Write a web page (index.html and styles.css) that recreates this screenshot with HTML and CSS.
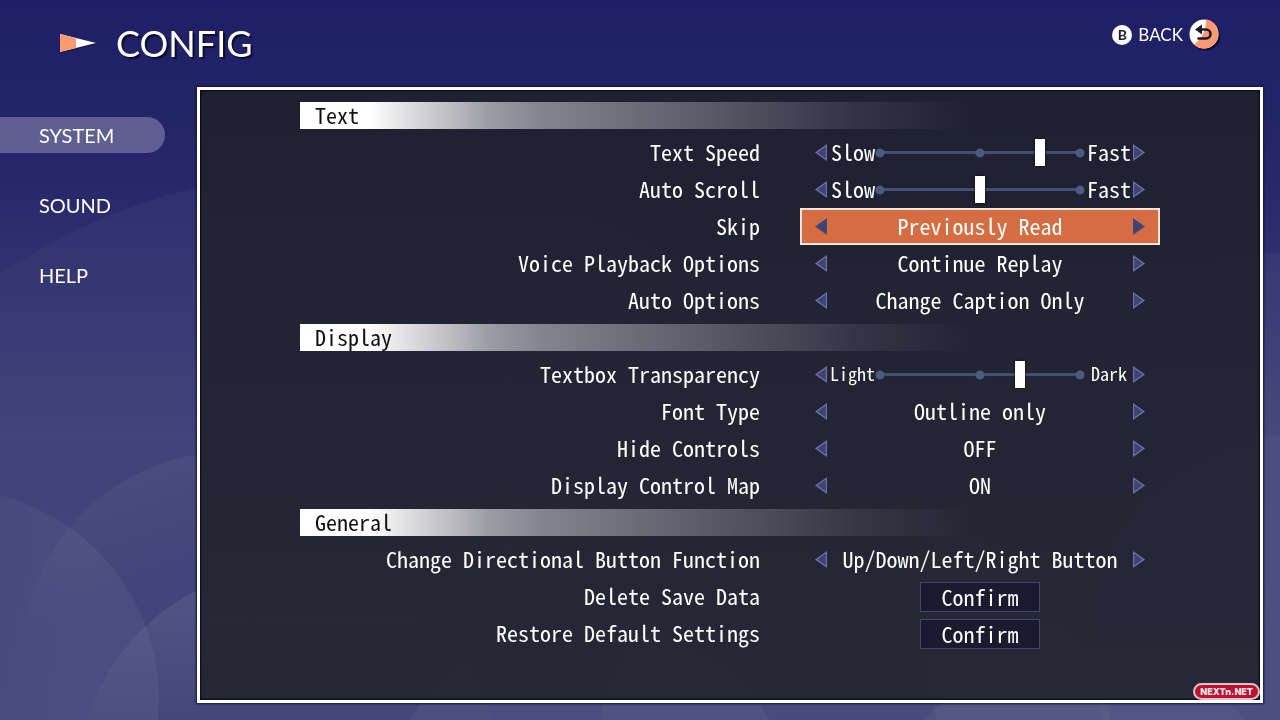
FILE: index.html
```
<!DOCTYPE html>
<html lang="en">
<head>
    <meta charset="UTF-8">
    <meta name="viewport" content="width=device-width, initial-scale=1.0">
    <title>Config</title>
    <link rel="stylesheet" href="styles.css">
</head>
<body>
<!-- Background circles -->
<svg class="backdrop" viewBox="0 0 1280 720" preserveAspectRatio="xMidYMid slice" aria-hidden="true">
    <defs>
        <linearGradient id="fadeLeft" x1="0" y1="0" x2="1" y2="0">
            <stop offset="0.25" stop-color="#8f93a8" stop-opacity="0"/>
            <stop offset="0.8" stop-color="#8f93a8" stop-opacity="0.12"/>
        </linearGradient>
        <linearGradient id="fadeDown" x1="0" y1="0" x2="0" y2="1">
            <stop offset="0" stop-color="#8f93a8" stop-opacity="0.24"/>
            <stop offset="0.35" stop-color="#8f93a8" stop-opacity="0.03"/>
        </linearGradient>
        <linearGradient id="fadeBig" x1="0" y1="0" x2="0" y2="1">
            <stop offset="0" stop-color="#8f93a8" stop-opacity="0.08"/>
            <stop offset="0.25" stop-color="#8f93a8" stop-opacity="0"/>
        </linearGradient>
        <linearGradient id="fadeTop" x1="0" y1="0" x2="0.3" y2="1">
            <stop offset="0" stop-color="#8f93a8" stop-opacity="0.16"/>
            <stop offset="0.4" stop-color="#8f93a8" stop-opacity="0"/>
        </linearGradient>
    </defs>
    <circle cx="350" cy="800" r="632" fill="url(#fadeBig)"/>
    <circle cx="230" cy="660" r="208" fill="url(#fadeTop)"/>
    <circle cx="-52" cy="700" r="211" fill="url(#fadeLeft)"/>
    <circle cx="290" cy="780" r="211" fill="url(#fadeDown)"/>
    <circle cx="590" cy="830" r="211" fill="#8f93a8" fill-opacity="0.1"/>
    <circle cx="855" cy="770" r="260" fill="#8f93a8" fill-opacity="0.08"/>
    <circle cx="1085" cy="856" r="210" fill="#8f93a8" fill-opacity="0.1"/>
    <circle cx="1290" cy="620" r="367" fill="#8f93a8" fill-opacity="0.08"/>
    <circle cx="1300" cy="645" r="211" fill="#8f93a8" fill-opacity="0.06"/>
</svg>

<div class="page">
    <header class="header">
        <h1 class="title">
            <svg class="title-icon" viewBox="0 0 38 20" aria-hidden="true">
                <path d="M1 2 37 11 1 20Z" fill="#11123f"/>
                <path d="M0 1 36 10 0 19Z" fill="#fff"/>
                <path d="M0 1 16 5V15L0 19Z" fill="#fd9a72"/>
            </svg>
            CONFIG
        </h1>
        <button type="button" class="back">
            <span class="key">B</span>
            BACK
            <svg class="back-icon" viewBox="0 0 32 32" aria-hidden="true">
                <circle cx="17" cy="17" r="14.5" fill="#0e0f38"/>
                <circle cx="15" cy="15" r="14.5" fill="#fff"/>
                <path d="M17 .6A14.5 14.5 0 1 1 5 25.5Q17 17 17 .6Z" fill="#fd9a72"/>
                <path d="M11 10.5H17A4.500 4.500 0 0 1 17 19.500H8.500" fill="none" stroke="#1a1c2c" stroke-width="2.6"/>
                <path d="M6 10.500 13 5.500V15.500Z" fill="#1a1c2c"/>
            </svg>
        </button>
    </header>

    <nav class="menu">
        <a href="#system" class="menu-item active">SYSTEM</a>
        <a href="#sound" class="menu-item">SOUND</a>
        <a href="#help" class="menu-item">HELP</a>
    </nav>

    <main class="panel" id="system">
        <h2 class="section">Text</h2>
        <div class="row">
            <label class="name" for="textSpeed">Text Speed</label>
            <div class="control">
                <button type="button" class="arrow" data-step="-1" aria-label="Slower"></button>
                <span class="end low">Slow</span>
                <input type="range" class="slider" id="textSpeed" min="0" max="10" value="8">
                <span class="end">Fast</span>
                <button type="button" class="arrow right" data-step="1" aria-label="Faster"></button>
            </div>
        </div>
        <div class="row">
            <label class="name" for="autoScroll">Auto Scroll</label>
            <div class="control">
                <button type="button" class="arrow" data-step="-1" aria-label="Slower"></button>
                <span class="end low">Slow</span>
                <input type="range" class="slider" id="autoScroll" min="0" max="10" value="5">
                <span class="end">Fast</span>
                <button type="button" class="arrow right" data-step="1" aria-label="Faster"></button>
            </div>
        </div>
        <div class="row">
            <label class="name" for="skip">Skip</label>
            <div class="control selected">
                <button type="button" class="arrow" aria-label="Previous"></button>
                <output class="value" id="skip">Previously Read</output>
                <button type="button" class="arrow right" aria-label="Next"></button>
            </div>
        </div>
        <div class="row">
            <label class="name" for="voicePlayback">Voice Playback Options</label>
            <div class="control">
                <button type="button" class="arrow" aria-label="Previous"></button>
                <output class="value" id="voicePlayback">Continue Replay</output>
                <button type="button" class="arrow right" aria-label="Next"></button>
            </div>
        </div>
        <div class="row">
            <label class="name" for="autoOptions">Auto Options</label>
            <div class="control">
                <button type="button" class="arrow" aria-label="Previous"></button>
                <output class="value" id="autoOptions">Change Caption Only</output>
                <button type="button" class="arrow right" aria-label="Next"></button>
            </div>
        </div>

        <h2 class="section">Display</h2>
        <div class="row">
            <label class="name" for="transparency">Textbox Transparency</label>
            <div class="control">
                <button type="button" class="arrow" data-step="-1" aria-label="Lighter"></button>
                <span class="end low small">Light</span>
                <input type="range" class="slider" id="transparency" min="0" max="10" value="7">
                <span class="end small">Dark</span>
                <button type="button" class="arrow right" data-step="1" aria-label="Darker"></button>
            </div>
        </div>
        <div class="row">
            <label class="name" for="fontType">Font Type</label>
            <div class="control">
                <button type="button" class="arrow" aria-label="Previous"></button>
                <output class="value" id="fontType">Outline only</output>
                <button type="button" class="arrow right" aria-label="Next"></button>
            </div>
        </div>
        <div class="row">
            <label class="name" for="hideControls">Hide Controls</label>
            <div class="control">
                <button type="button" class="arrow" aria-label="Previous"></button>
                <output class="value" id="hideControls">OFF</output>
                <button type="button" class="arrow right" aria-label="Next"></button>
            </div>
        </div>
        <div class="row">
            <label class="name" for="controlMap">Display Control Map</label>
            <div class="control">
                <button type="button" class="arrow" aria-label="Previous"></button>
                <output class="value" id="controlMap">ON</output>
                <button type="button" class="arrow right" aria-label="Next"></button>
            </div>
        </div>

        <h2 class="section">General</h2>
        <div class="row">
            <label class="name" for="directional">Change Directional Button Function</label>
            <div class="control">
                <button type="button" class="arrow" aria-label="Previous"></button>
                <output class="value" id="directional">Up/Down/Left/Right Button</output>
                <button type="button" class="arrow right" aria-label="Next"></button>
            </div>
        </div>
        <div class="row">
            <label class="name" for="deleteSave">Delete Save Data</label>
            <div class="control center">
                <button type="button" class="confirm" id="deleteSave">Confirm</button>
            </div>
        </div>
        <div class="row">
            <label class="name" for="restore">Restore Default Settings</label>
            <div class="control center">
                <button type="button" class="confirm" id="restore">Confirm</button>
            </div>
        </div>

        <span class="badge">NEXTn.NET</span>
    </main>
</div>

<script>
    // Move the slider next to the arrow that was pressed
    document.querySelectorAll('.arrow[data-step]').forEach((arrow) => {
        arrow.addEventListener('click', () => {
            const slider = arrow.parentElement.querySelector('.slider');
            slider.value = Number(slider.value) + Number(arrow.dataset.step);
        });
    });
</script>
</body>
</html>
```
FILE: styles.css
```
* {
    box-sizing: border-box;
}
body {
    margin: 0;
    min-height: 100vh;
    color: #fff;
    font-family: "Noto Sans CJK JP", "Liberation Mono", monospace;
    font-feature-settings: "hwid", "liga" 0;
    font-size: 22px;
    background: linear-gradient(#1e1f66, #26286a 25%, #41437a 60%, #43457b) #43457b;
}
button {
    padding: 0;
    border: none;
    background: none;
    color: inherit;
    font: inherit;
    font-feature-settings: inherit;
    cursor: pointer;
}
.backdrop {
    position: fixed;
    inset: 0;
    z-index: -1;
    width: 100%;
    height: 100%;
}
.page {
    display: grid;
    grid-template-columns: 180px 1fr;
    grid-template-rows: 87px 1fr;
    column-gap: 17px;
    min-height: 100vh;
    padding: 0 17px 17px 0;
}

/* Header */
.header {
    grid-column: 1 / -1;
    display: flex;
    justify-content: space-between;
    align-items: flex-start;
    padding: 19px 42px 0 60px;
    font-family: Lato, sans-serif;
    font-feature-settings: normal;
}
.title {
    display: flex;
    align-items: center;
    gap: 18px;
    margin: 0;
    font-size: 36px;
    font-weight: 400;
    line-height: 48px;
    text-shadow: 2px 2px 1px #0b0c30;
}
.title-icon {
    width: 38px;
    height: 20px;
}
.back {
    display: flex;
    align-items: center;
    gap: 6px;
    font-size: 17px;
    line-height: 32px;
}
.key {
    width: 20px;
    height: 20px;
    border-radius: 50%;
    background: #fff;
    color: #1a1c40;
    font-size: 14px;
    font-weight: 700;
    line-height: 20px;
}
.back-icon {
    width: 32px;
    height: 32px;
}

/* Side menu */
.menu {
    display: flex;
    flex-direction: column;
    align-items: flex-start;
    gap: 34px;
    padding-top: 30px;
    font-family: Lato, sans-serif;
    font-feature-settings: normal;
}
.menu-item {
    width: 165px;
    padding-left: 39px;
    border-radius: 0 18px 18px 0;
    color: #fff;
    font-size: 20px;
    line-height: 36px;
    text-decoration: none;
}
.menu-item.active {
    background: #5f5f92;
}

/* Settings panel */
.panel {
    position: relative;
    padding: 7px 100px 40px;
    border: 3px solid #fff;
    background: linear-gradient(rgba(31, 32, 46, 0.94), rgba(37, 38, 50, 0.94));
    box-shadow: 0 0 2px 1px #14153f, inset 0 0 2px 1px #08080c;
}
.section {
    height: 27px;
    margin: 5px 0;
    padding-left: 15px;
    color: #111;
    font-size: 22px;
    font-weight: 400;
    line-height: 25px;
    background: linear-gradient(90deg, #fff 8%, #9c9ca4 22%, #84848f 28%, #5d5d6b 46%, rgba(70, 70, 85, 0.5) 65%, transparent 78%);
}
.row {
    display: grid;
    grid-template-columns: 1fr 360px;
    column-gap: 40px;
    height: 37px;
    line-height: 35px;
}
.name {
    text-align: right;
}
.control {
    display: flex;
    align-items: center;
    padding: 0 15px;
    text-align: center;
}
.control.center {
    justify-content: center;
}
.control.selected {
    background: #d66c42;
    box-shadow: inset 0 0 0 2px #fbe6dc;
}
.arrow {
    width: 12px;
    height: 17px;
    background: #6a71a8;
    clip-path: polygon(0 50%, 100% 0, 100% 100%);
}
.arrow::before {
    content: "";
    display: block;
    width: 100%;
    height: 100%;
    background: #3d4474;
    clip-path: polygon(20% 50%, 90% 14%, 90% 86%);
}
.arrow.right {
    transform: scaleX(-1);
}
.selected .arrow {
    background: #3f4a80;
}
.value,
.end {
    flex: 1;
    height: 37px;
    white-space: nowrap;
}
.low {
    text-align: right;
}
.small {
    font-size: 18px;
}

/* Slider with three marks */
.slider {
    appearance: none;
    width: 210px;
    height: 27px;
    margin: 0;
    background:
        radial-gradient(circle, #4b5a80 4px, transparent 5px) left / 10px 10px no-repeat,
        radial-gradient(circle, #4b5a80 4px, transparent 5px) center / 10px 10px no-repeat,
        radial-gradient(circle, #4b5a80 4px, transparent 5px) right / 10px 10px no-repeat,
        linear-gradient(#424f74, #424f74) center / 200px 3px no-repeat;
}
.slider::-webkit-slider-thumb {
    appearance: none;
    width: 10px;
    height: 27px;
    background: #fff;
    box-shadow: 0 0 2px #000;
}
.confirm {
    width: 120px;
    height: 30px;
    padding-bottom: 2px;
    border: 1px solid #40466e;
    background: #1b1b30;
    line-height: 26px;
}
.badge {
    position: absolute;
    right: 0;
    bottom: 0;
    padding: 0 5px;
    border: 2px solid #d8c4cc;
    border-radius: 9px;
    background: #c01030;
    color: #f4e4e8;
    font-family: Inter, sans-serif;
    font-feature-settings: normal;
    font-size: 9px;
    font-weight: 900;
    line-height: 13px;
}
```
